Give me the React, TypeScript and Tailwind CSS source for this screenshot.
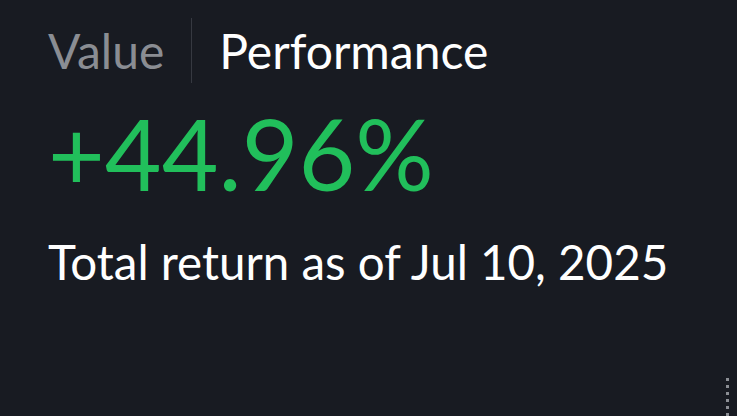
import React from 'react';

function ResizeGrip() {
  return (
    <div className="absolute right-[8px] bottom-0 flex flex-col gap-[4px]">
      {Array.from({ length: 6 }).map((_, i) => (
        <span key={i} className="block w-[3px] h-[3px] bg-[#8b8e94]" />
      ))}
    </div>
  );
}

export default function App() {
  return (
    <div
      className="relative w-[737px] h-[416px] bg-[#181b22] overflow-hidden pl-[48px]"
      style={{ fontFamily: 'Lato, "Noto Sans", sans-serif' }}
    >
      {/* Tabs */}
      <div className="flex items-center h-[65px] mt-[18px]">
        <span className="text-[48px] leading-none text-[#8a8d93]">Value</span>
        <div className="w-px self-stretch bg-[#363941] mx-[27px]" />
        <span className="text-[48px] leading-none text-white">Performance</span>
      </div>

      {/* Headline */}
      <div className="mt-[21px] text-[98px] leading-none text-[#21bf5b]">
        +44.96%
      </div>
      <div className="mt-[36px] text-[47.5px] leading-none text-white">
        Total return as of Jul 10, 2025
      </div>

      <ResizeGrip />
    </div>
  );
}
